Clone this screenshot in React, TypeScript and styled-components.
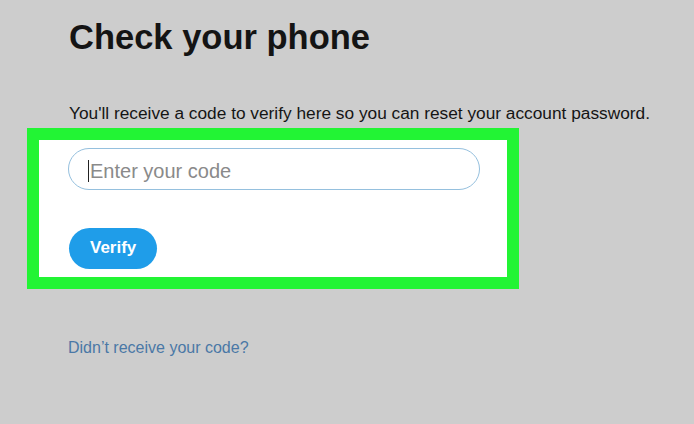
import styled, { createGlobalStyle } from 'styled-components';

const GlobalStyle = createGlobalStyle`
  html, body {
    margin: 0;
    padding: 0;
    background: #cdcdcd;
  }

  body {
    font-family: "Liberation Sans", Arial, sans-serif;
    color: #111;
  }
`;

const Page = styled.main`
  display: flex;
  flex-direction: column;
  align-items: flex-start;
  width: 694px;
  height: 424px;
  box-sizing: border-box;
  padding: 20px 0 0 27px;
  overflow: hidden;
`;

const Title = styled.h1`
  margin: 0 0 0 42px;
  font-size: 34.5px;
  line-height: 1;
  font-weight: 700;
  color: #141414;
`;

const Lead = styled.p`
  margin: 50px 0 0 42px;
  font-size: 17.3px;
  line-height: 1;
  color: #151515;
  white-space: nowrap;
`;

const Highlight = styled.section`
  width: 492px;
  box-sizing: border-box;
  margin-top: 6px;
  border: 12px solid #22f434;
  background: #ffffff;
  padding: 8px 0 8px 29px;
  display: flex;
  flex-direction: column;
  align-items: flex-start;
  gap: 38px;
`;

const Field = styled.div`
  position: relative;
  width: 412px;
`;

const CodeInput = styled.input`
  display: block;
  width: 100%;
  height: 42px;
  box-sizing: border-box;
  border: 1.5px solid #95c0de;
  border-radius: 21px;
  padding: 5px 0 0 21px;
  font-family: inherit;
  font-size: 20px;
  color: #333;
  background: #fff;
  outline: none;

  &::placeholder {
    color: #8a8a8a;
  }
`;

const Caret = styled.span`
  position: absolute;
  left: 20px;
  top: 12px;
  width: 1px;
  height: 22px;
  background: #222;
`;

const VerifyButton = styled.button`
  height: 41px;
  margin-left: 1px;
  padding: 0 21px;
  border: none;
  border-radius: 21px;
  background: #1f9de9;
  color: #fff;
  font-family: inherit;
  font-size: 17px;
  font-weight: 700;
  cursor: pointer;
`;

const HelpLink = styled.a`
  margin: 51px 0 0 41px;
  font-size: 16px;
  line-height: 1;
  color: #4a78a6;
  text-decoration: none;
`;

const App = () => {
  return (
    <>
      <GlobalStyle />
      <Page>
        <Title>Check your phone</Title>
        <Lead>
          You'll receive a code to verify here so you can reset your account
          password.
        </Lead>
        <Highlight>
          <Field>
            <CodeInput type="text" placeholder="Enter your code" />
            <Caret />
          </Field>
          <VerifyButton type="button">Verify</VerifyButton>
        </Highlight>
        <HelpLink href="#">Didn’t receive your code?</HelpLink>
      </Page>
    </>
  );
};

export default App;
